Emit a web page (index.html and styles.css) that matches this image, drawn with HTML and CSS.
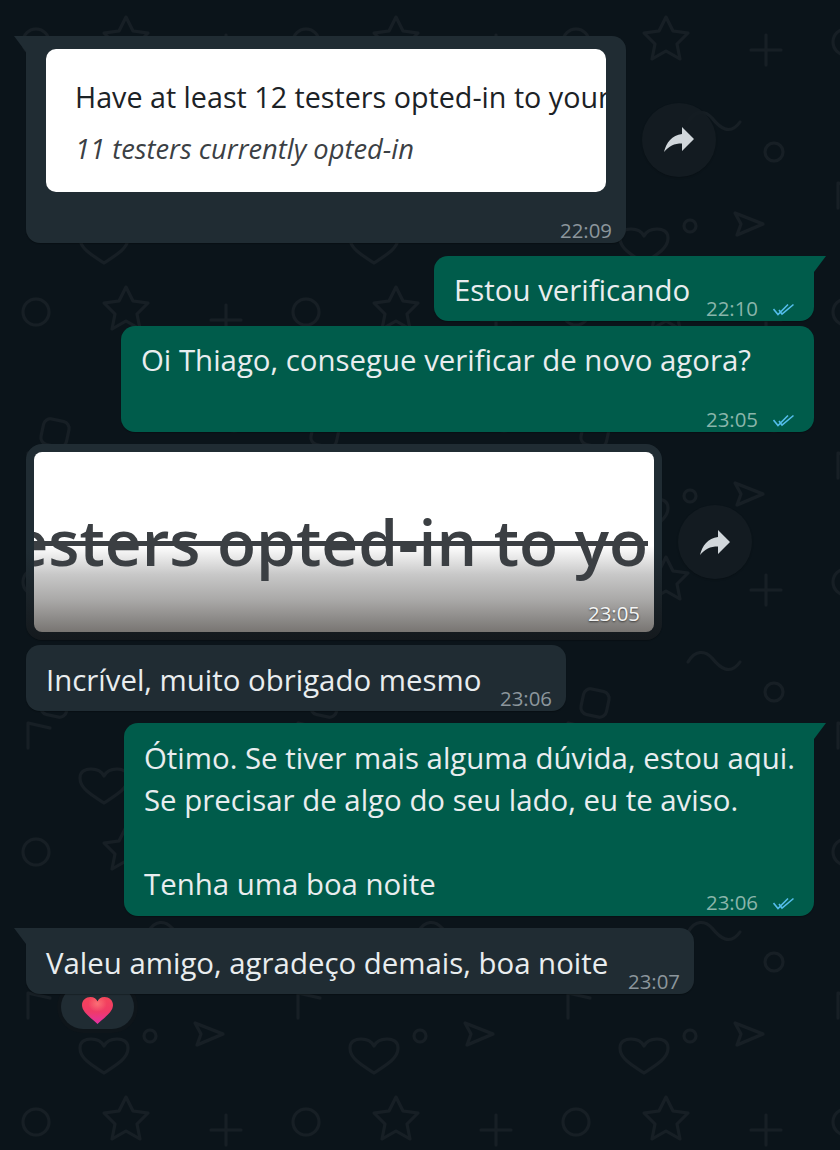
FILE: index.html
```html
<!DOCTYPE html>
<html lang="pt">
<head>
<meta charset="utf-8">
<title>Conversa</title>
<link rel="stylesheet" href="styles.css">
</head>
<body>
<main class="chat">
  <div class="row">
    <article class="bubble in tail stack b1">
      <div class="card">
        <p class="card-main">Have at least 12 testers opted-in to your</p>
        <p class="card-sub">11 testers currently opted-in</p>
      </div>
      <div class="meta m1"><span class="time">22:09</span></div>
    </article>
    <button class="forward" aria-label="Encaminhar"><svg width="30" height="25" viewBox="0 0 30 25"><path d="M30 12 18 0v7C8 8 2 16 0 25c5-6 10-8.500 18-8.500V24z"/></svg></button>
  </div>

  <article class="bubble out tail b2 gap13">
    <p class="text t2">Estou verificando</p>
    <div class="meta"><span class="time">22:10</span><svg class="ticks" width="21" height="13" viewBox="0 0 21 13"><path d="M.5 6 5 11.500 15 1.500M6 7l3 4L20.500 1.500"/></svg></div>
  </article>

  <article class="bubble out stack b3 gap5">
    <p class="text t3">Oi Thiago, consegue verificar de novo agora?</p>
    <div class="meta"><span class="time">23:05</span><svg class="ticks" width="21" height="13" viewBox="0 0 21 13"><path d="M.5 6 5 11.500 15 1.500M6 7l3 4L20.500 1.500"/></svg></div>
  </article>

  <div class="row gap12">
    <article class="bubble in media b4">
      <div class="shot">
        <span class="shot-text">testers opted-in to yo</span>
        <span class="time shot-time">23:05</span>
      </div>
    </article>
    <button class="forward" aria-label="Encaminhar"><svg width="30" height="25" viewBox="0 0 30 25"><path d="M30 12 18 0v7C8 8 2 16 0 25c5-6 10-8.500 18-8.500V24z"/></svg></button>
  </div>

  <article class="bubble in b5 gap5">
    <p class="text t5">Incrível, muito obrigado mesmo</p>
    <div class="meta"><span class="time">23:06</span></div>
  </article>

  <article class="bubble out tail stack b6 gap12">
    <p class="text t6">Ótimo. Se tiver mais alguma dúvida, estou aqui.<br>Se precisar de algo do seu lado, eu te aviso.<br><br>Tenha uma boa noite</p>
    <div class="meta m6"><span class="time">23:06</span><svg class="ticks" width="21" height="13" viewBox="0 0 21 13"><path d="M.5 6 5 11.500 15 1.500M6 7l3 4L20.500 1.500"/></svg></div>
  </article>

  <article class="bubble in tail b7 gap12">
    <p class="text t5">Valeu amigo, agradeço demais, boa noite</p>
    <div class="meta"><span class="time">23:07</span></div>
  </article>
  <div class="reaction">
    <svg width="31" height="27" viewBox="0 0 31 27">
      <defs>
        <linearGradient id="hg" x1="0" y1="0" x2="0" y2="1">
          <stop offset="0" stop-color="#f4455a"/>
          <stop offset=".55" stop-color="#f03a68"/>
          <stop offset="1" stop-color="#e431a6"/>
        </linearGradient>
        <radialGradient id="hl" cx=".5" cy=".25" r=".3">
          <stop offset="0" stop-color="#ff8a80" stop-opacity=".65"/>
          <stop offset="1" stop-color="#ff8a80" stop-opacity="0"/>
        </radialGradient>
      </defs>
      <path fill="url(#hg)" d="M15.500 27C11 22 0 16 0 8 0 3 4 0 8.500 0c3.500 0 6 2 7 4.500C16.500 2 19 0 22.500 0 27 0 31 3 31 8c0 8-11 14-15.500 19z"/>
      <path fill="url(#hl)" d="M15.500 27C11 22 0 16 0 8 0 3 4 0 8.500 0c3.500 0 6 2 7 4.500C16.500 2 19 0 22.500 0 27 0 31 3 31 8c0 8-11 14-15.500 19z"/>
    </svg>
  </div>
</main>
</body>
</html>
```
FILE: styles.css
```css
* { box-sizing: border-box; }

html, body { height: 100%; }

body {
  margin: 0;
  overflow: hidden;
  background-color: #0b141a;
  background-image: url("data:image/svg+xml,%3Csvg xmlns='http://www.w3.org/2000/svg' width='270' height='270' viewBox='0 0 270 270' fill='none' stroke='%23171f25' stroke-width='3' stroke-linejoin='round' stroke-linecap='round'%3E%3Ccircle cx='36' cy='42' r='13'/%3E%3Cpath d='M126 17 133 31 148 33 137 44 140 59 126 51 112 59 115 44 104 33 119 31Z'/%3E%3Cpath d='M226 35V65M211 50H241'/%3E%3Cpath d='M148 122C155 110 165 110 172 118 180 128 190 136 200 122'/%3E%3Ccircle cx='234' cy='152' r='9'/%3E%3Crect x='42' y='150' width='26' height='26' rx='7' transform='rotate(12 55 163)'/%3E%3Cpath d='M28 208V183L50 188'/%3E%3Cpath d='M223 224 195 213 201 224 197 235Z'/%3E%3Ccircle cx='150' cy='226' r='6'/%3E%3Cpath d='M104 263C90 254 80 248 80 238 80 231 86 229 91 229 97 229 102 232 104 236 106 232 111 229 117 229 122 229 128 231 128 238 128 248 118 254 104 263Z'/%3E%3C/svg%3E");
  font-family: "Open Sans", "Noto Sans", sans-serif;
  color: #e9edef;
}

.chat {
  display: flex;
  flex-direction: column;
  padding: 36px 26px 0;
}

.row {
  display: flex;
  align-items: center;
  gap: 16px;
}

.gap5 { margin-top: 5px; }
.gap12 { margin-top: 12px; }
.gap13 { margin-top: 13px; }

.bubble {
  position: relative;
  z-index: 1;
  display: flex;
  justify-content: space-between;
  border-radius: 14px;
  padding: 13px 14px 0 20px;
  box-shadow: 0 1px 1px rgba(0, 0, 0, .25);
}

.stack { flex-direction: column; justify-content: flex-start; }

.in { background: #202c33; align-self: flex-start; }

.out {
  background: #005c4b;
  align-self: flex-end;
  padding-right: 20px;
}

.tail.in { border-top-left-radius: 0; }
.tail.out { border-top-right-radius: 0; }

.tail::before {
  content: "";
  position: absolute;
  top: 0;
  width: 12px;
  height: 16px;
}

.tail.in::before {
  left: -12px;
  background: #202c33;
  clip-path: polygon(0 0, 100% 0, 100% 100%);
}

.tail.out::before {
  right: -12px;
  background: #005c4b;
  clip-path: polygon(0 0, 100% 0, 0 100%);
}

.text {
  margin: 0;
  font-size: 29.400px;
  line-height: 42px;
  white-space: nowrap;
}

.meta {
  display: flex;
  align-items: center;
  justify-content: flex-end;
  gap: 15px;
  height: 24px;
  align-self: flex-end;
}

.time {
  margin-bottom: 2px;
  font-size: 20.400px;
  line-height: 24px;
  color: #8c969c;
}

.out .time { color: #8ab5aa; }

.ticks {
  fill: none;
  stroke: #53bdeb;
  stroke-width: 1.600;
}

.b1 { width: 600px; height: 207px; }

.card {
  width: 560px;
  height: 143px;
  background: #fff;
  border-radius: 10px;
  padding: 27px 0 0 29px;
  overflow: hidden;
  white-space: nowrap;
}

.card-main, .card-sub {
  margin: 0;
  font-size: 28.700px;
  line-height: 42px;
  color: #1c2226;
}

.card-sub {
  margin-top: 10px;
  font-size: 27.300px;
  font-style: italic;
  color: #3b4044;
}

.m1 { margin-top: 27px; }

.forward {
  display: flex;
  align-items: center;
  justify-content: center;
  width: 74px;
  height: 74px;
  padding: 0;
  border: 0;
  border-radius: 50%;
  background: rgba(20, 28, 34, .88);
  box-shadow: 0 1px 2px rgba(0, 0, 0, .2);
}

.forward path { fill: #d1d7db; }

.b2 { width: 380px; height: 65px; }
.t2 { margin-bottom: 10px; }

.b3 { width: 693px; height: 106px; }
.t3 { margin-bottom: 27px; }

.b4 {
  width: 636px;
  height: 196px;
  padding: 8px;
  border-radius: 16px;
  background: linear-gradient(#202c33 0 55%, #14191d 100%);
}

.shot {
  position: relative;
  display: flex;
  justify-content: flex-end;
  width: 620px;
  height: 180px;
  padding: 48px 6px 0 0;
  overflow: hidden;
  border-radius: 8px;
  background: linear-gradient(#fff 0, #fff 52%, #c8c8c8 68%, #aaa9a8 82%, #787572 100%);
}

.shot-text {
  font-size: 64px;
  font-weight: 600;
  line-height: 84px;
  height: 84px;
  white-space: nowrap;
  color: #3b3f43;
  text-decoration: line-through;
  text-decoration-thickness: 5px;
}

.shot-time {
  position: absolute;
  right: 14px;
  bottom: 5px;
  color: #f4f5f5;
  text-shadow: 0 1px 2px rgba(0, 0, 0, .6);
}

.b5 { width: 540px; height: 66px; padding-top: 14px; }
.t5 { margin-bottom: 10px; }

.b6 { width: 690px; height: 193px; padding-top: 14px; }
.m6 { margin-top: -14px; }

.b7 { width: 668px; height: 66px; padding-top: 14px; }

.reaction {
  align-self: flex-start;
  display: flex;
  justify-content: center;
  width: 73px;
  height: 44px;
  margin: -9px 0 0 35px;
  padding-top: 12px;
  border-radius: 24px;
  background: #202c33;
  box-shadow: 0 0 0 4px #0e151a;
}
```
